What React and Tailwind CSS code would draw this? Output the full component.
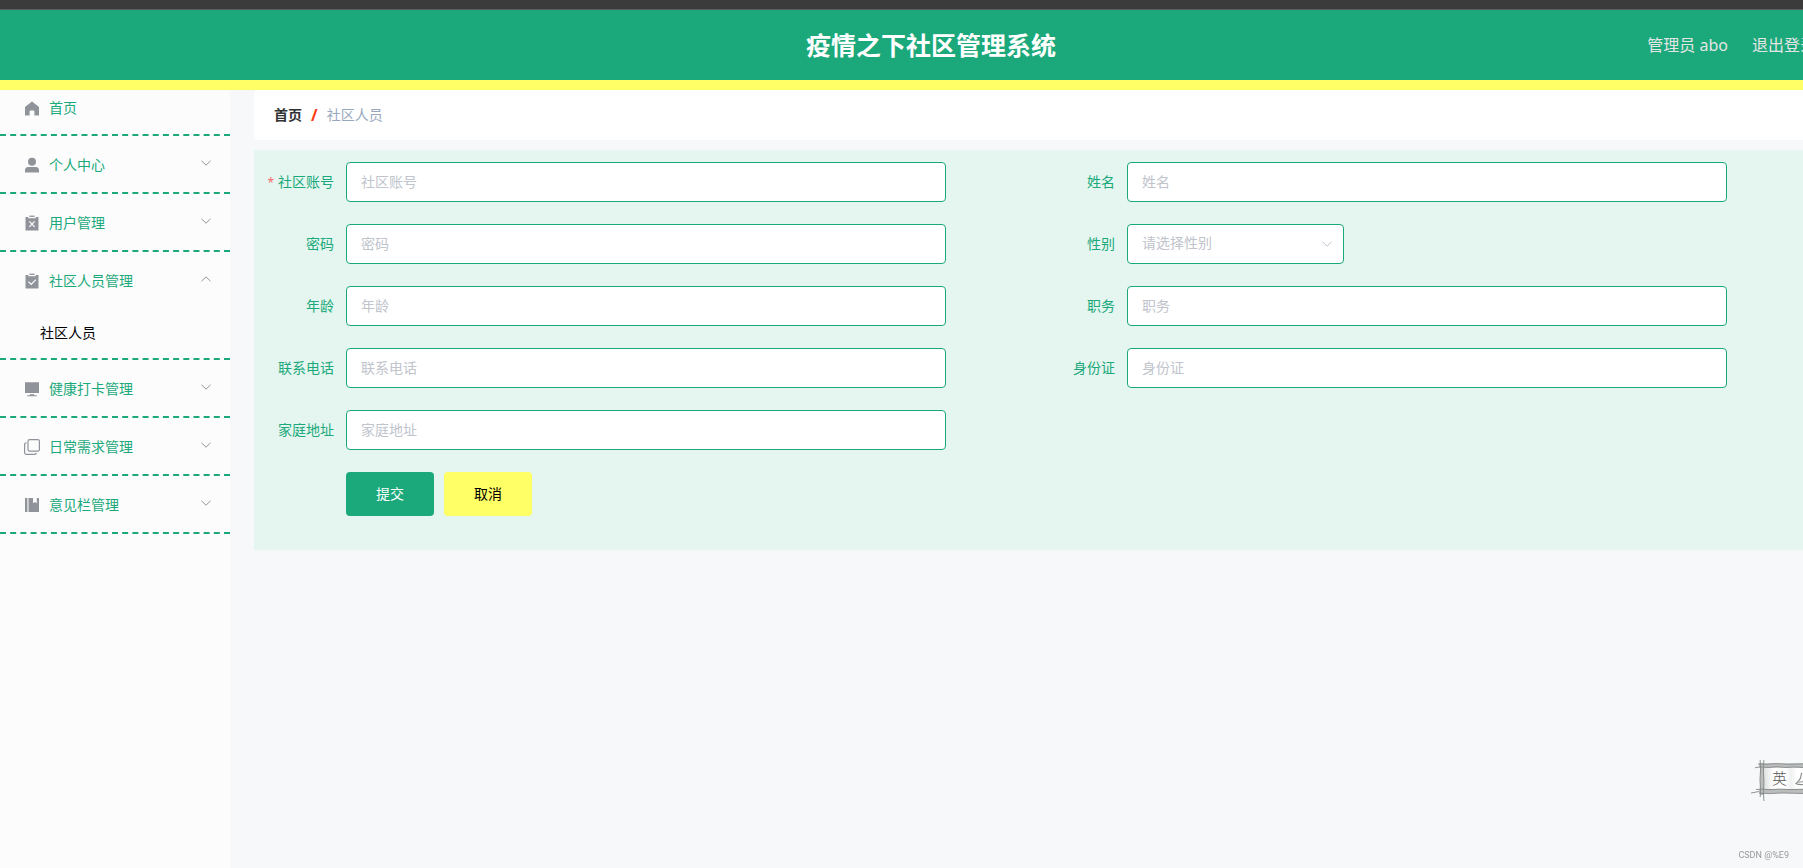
import { useState } from "react";

const svgProps = {
  viewBox: "0 0 16 16",
  className: "h-4 w-4 shrink-0 text-[#909399]",
  "aria-hidden": true,
};

const HomeIcon = () => (
  <svg {...svgProps} fill="currentColor">
    <path d="M8 1.400 15 7V15.400h-4.600V11.600a1 1 0 0 0-1-1H6.600a1 1 0 0 0-1 1v3.800H1V7z" />
  </svg>
);

const UserIcon = () => (
  <svg {...svgProps} fill="currentColor">
    <circle cx="8" cy="4.800" r="4" />
    <path d="M1 15.400v-2.200A3.400 3.400 0 0 1 4.400 9.900h7.200a3.400 3.400 0 0 1 3.400 3.300v2.200z" />
  </svg>
);

const ReleaseIcon = () => (
  <svg {...svgProps} fill="currentColor">
    <path d="M5.400.6h5.200v1.300H5.400z" />
    <path d="M1.500 2h2.800v1.300h7.400V2h2.800v13.400h-13z" />
    <path d="M5.400 6.400l5.200 5.400M10.600 6.400l-5.200 5.400" stroke="#fcfcfc" strokeWidth="1.200" />
  </svg>
);

const ClaimIcon = () => (
  <svg {...svgProps} fill="currentColor">
    <path d="M5.400.6h5.200v1.300H5.400z" />
    <path d="M1.500 2h2.800v1.300h7.400V2h2.800v13.400h-13z" />
    <path d="M4.400 8.600l2.800 2.700 4.600-4.600" fill="none" stroke="#fcfcfc" strokeWidth="1.200" />
  </svg>
);

const PlatformIcon = () => (
  <svg {...svgProps} fill="currentColor">
    <path d="M1 1.200h14v10.900H1zM6 13.300h4l.5 1h2.300v.9H3.200v-.9h2.300z" />
  </svg>
);

const CopyIcon = () => (
  <svg {...svgProps} fill="none" stroke="currentColor" strokeWidth="1.200">
    <rect x="4" y=".6" width="11.400" height="11.600" rx="1.600" />
    <path d="M2.500 3.800A1.800 1.800 0 0 0 .6 5.600v8a1.800 1.800 0 0 0 1.800 1.800h8.200a1.800 1.800 0 0 0 1.800-1.500" />
  </svg>
);

const NotebookIcon = () => (
  <svg {...svgProps} fill="currentColor">
    <path d="M1 1h2.400v14H1zM4.500 1H9v5.200l1.900-1.300 1.900 1.300V1H15v14H4.500z" />
  </svg>
);

const Chevron = ({ up = false, className }) => (
  <svg viewBox="0 0 12 12" className={className} fill="none" stroke="currentColor" strokeWidth="1" aria-hidden="true">
    <path d={up ? "M1.500 8.200 6 3.800l4.500 4.400" : "M1.500 3.800 6 8.200l4.500-4.400"} />
  </svg>
);

const menu = [
  { title: "个人中心", Icon: UserIcon, items: [] },
  { title: "用户管理", Icon: ReleaseIcon, items: [] },
  { title: "社区人员管理", Icon: ClaimIcon, items: ["社区人员"] },
  { title: "健康打卡管理", Icon: PlatformIcon, items: [] },
  { title: "日常需求管理", Icon: CopyIcon, items: [] },
  { title: "意见栏管理", Icon: NotebookIcon, items: [] },
];

function Sidebar() {
  const [open, setOpen] = useState("社区人员管理");
  return (
    <nav className="w-[230px] shrink-0 bg-[#fcfcfc] text-[#1ba97b]">
      <ul>
        <li className="border-b-2 border-dashed border-[#1ba97b]">
          <a href="#home" className="flex h-11 items-center gap-[9px] pb-2 pl-6">
            <HomeIcon />
            首页
          </a>
        </li>
        {menu.map(({ title, Icon, items }) => (
          <li key={title} className="border-b-2 border-dashed border-[#1ba97b]">
            <button
              type="button"
              aria-expanded={open === title}
              onClick={() => setOpen(open === title ? "" : title)}
              className="flex h-14 w-full items-center gap-[9px] pt-0.5 pr-[18px] pl-6 text-left"
            >
              <Icon />
              <span className="flex-1">{title}</span>
              <Chevron up={open === title} className="mb-1 h-3 w-3 text-[#909399]" />
            </button>
            {open === title &&
              items.map((item) => (
                <a key={item} href="#staff" className="flex h-[50px] items-center pl-10 text-black">
                  {item}
                </a>
              ))}
          </li>
        ))}
      </ul>
    </nav>
  );
}

const control =
  "h-10 w-full rounded-[4px] border border-[#1ba97b] bg-white px-[14px] pb-0.5 text-sm outline-none placeholder:text-[#c0c4cc]";

function Field({ id, label, required = false, children }) {
  return (
    <div className="flex items-center">
      <label htmlFor={id} className="w-20 shrink-0 pr-3 text-right leading-10 whitespace-nowrap text-[#1ba97b]">
        {required && <span className="mr-1 text-xs text-[#f56c6c]">*</span>}
        {label}
      </label>
      <div className="w-full max-w-[600px]">
        {children || <input id={id} type="text" placeholder={label} className={`${control} text-[#606266]`} />}
      </div>
    </div>
  );
}

function StaffForm() {
  return (
    <form
      onSubmit={(event) => event.preventDefault()}
      className="mt-2.5 bg-[#e5f6f0] pt-3 pr-[10px] pb-[34px] pl-3"
    >
      <div className="grid grid-cols-2 gap-y-[22px]">
        <Field id="account" label="社区账号" required />
        <Field id="name" label="姓名" />
        <Field id="password" label="密码" />
        <Field id="gender" label="性别">
          <div className="relative w-[217px]">
            <select id="gender" defaultValue="" className={`${control} appearance-none text-[#c0c4cc]`}>
              <option value="" disabled>
                请选择性别
              </option>
              <option>男</option>
              <option>女</option>
            </select>
            <Chevron className="pointer-events-none absolute top-[14px] right-[11px] h-3 w-3 text-[#c0c4cc]" />
          </div>
        </Field>
        <Field id="age" label="年龄" />
        <Field id="job" label="职务" />
        <Field id="phone" label="联系电话" />
        <Field id="idcard" label="身份证" />
        <Field id="address" label="家庭地址" />
      </div>
      <div className="mt-[22px] flex gap-2.5 pl-20">
        <button type="submit" className="h-11 w-[88px] rounded-[4px] bg-[#1ba97b] text-white">
          提交
        </button>
        <button type="button" className="h-11 w-[88px] rounded-[4px] bg-[#ffff66] text-black">
          取消
        </button>
      </div>
    </form>
  );
}

function InputMethodBar() {
  return (
    <div className="fixed right-0 bottom-[65px] h-11 w-14">
      <svg viewBox="0 0 56 44" className="h-full w-full" fill="none" aria-hidden="true">
        <defs>
          <linearGradient id="paper" x1="0" x2="1" y1="0" y2="0">
            <stop offset="0" stopColor="#dfe1e1" />
            <stop offset="0.25" stopColor="#ffffff" />
            <stop offset="0.55" stopColor="#ffffff" />
            <stop offset="0.7" stopColor="#f0f1f1" />
            <stop offset="0.85" stopColor="#ffffff" />
          </linearGradient>
        </defs>
        <rect x="17" y="8" width="39" height="23" fill="url(#paper)" />
        <path d="M12 6.500H56M12 32H56" stroke="#babdbc" strokeWidth="4" />
        <path d="M15 4V36" stroke="#babdbc" strokeWidth="4" />
        <path
          d="M8 8.800l5-.9 8 .6 9-.7 9 .7 8-.5 9 .5M11 4.900l8 .3 10-.6 12 .6 15-.4M9 30.500l6-.4 8 .5 10-.5 11 .5 12-.4M12 34.200l11 .4 12-.6 21 .5M4 34l8-1.500"
          stroke="#858988"
          strokeWidth="0.900"
        />
        <path d="M13.200 1l.4 9-.6 10 .5 12-.3 6M16.800 1l-.4 11 .6 11-.5 10 .4 9" stroke="#858988" strokeWidth="0.900" />
        <path d="M55 14c-1 1-1 3-1.500 5s-3 4-4.500 5.500c2 1.500 5 1 7 1" stroke="#8b8f8e" strokeWidth="1.200" />
        <path d="M51 23.500l5-1" stroke="#b5b8b7" strokeWidth="1.500" />
      </svg>
      <span className="absolute top-[10px] left-[25px] font-['Liberation_Serif','Noto_Sans_CJK_SC',serif] text-[15px] leading-5 font-light text-[#5a5a5a]">
        英
      </span>
    </div>
  );
}

export default function App() {
  return (
    <div className="overflow-hidden bg-[#f7f8fa] font-['Noto_Sans','Noto_Sans_CJK_SC',sans-serif] text-sm">
      <div className="flex min-h-screen w-[calc(100%+59px)] flex-col">
        <div className="h-2.5 border-b border-[#5c5c5c] bg-[#3b3b3b]" />
        <header className="grid h-20 grid-cols-3 items-center border-b-10 border-[#ffff66] bg-[#1ba97b]">
          <h1 className="col-start-2 text-center text-[25px] leading-9 font-bold text-white">
            疫情之下社区管理系统
          </h1>
          <div className="flex justify-end gap-6 pr-[46px] text-base text-[#e5e5e5]">
            <span>管理员 abo</span>
            <a href="#logout">退出登录</a>
          </div>
        </header>
        <div className="flex flex-1">
          <Sidebar />
          <main className="min-w-0 flex-1 px-6">
            <nav className="flex h-[50px] items-center rounded-[4px] bg-white pl-5">
              <a href="#home" className="font-bold text-[#303133]">
                首页
              </a>
              <span className="mx-[9px] text-base font-bold text-[#ff3b14]">/</span>
              <span className="text-[#97a8be]">社区人员</span>
            </nav>
            <StaffForm />
          </main>
        </div>
      </div>
      <InputMethodBar />
      <div className="fixed right-[14px] bottom-[5px] font-[Roboto,sans-serif] text-[9px] leading-4 text-[#999999]">
        CSDN @%E9
      </div>
    </div>
  );
}
